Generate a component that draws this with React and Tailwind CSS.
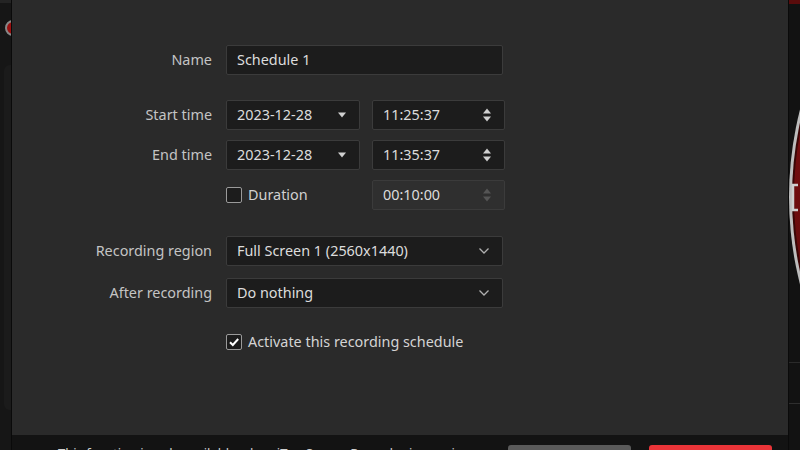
import React, { useState } from "react";

const font = { fontFamily: "'Noto Sans', 'Open Sans', sans-serif" };

const DownTri = ({ className = "" }) => (
  <svg width="10" height="6" viewBox="0 0 10 6" className={className}>
    <path d="M1 0.5 L9 0.5 L5 5.5 Z" fill="currentColor" />
  </svg>
);

const Spinner = ({ disabled }) => (
  <svg width="10" height="16" viewBox="0 0 10 16" className={disabled ? "text-[#555]" : "text-[#d0d0d0]"}>
    <path d="M1 6.5 L9 6.5 L5 1.5 Z" fill="currentColor" />
    <path d="M1 9.5 L9 9.5 L5 14.5 Z" fill="currentColor" />
  </svg>
);

const Chevron = () => (
  <svg width="12" height="8" viewBox="0 0 12 8" className="text-[#b0b0b0]">
    <path d="M1.5 1.5 L6 6 L10.5 1.5" fill="none" stroke="currentColor" strokeWidth="1.3" />
  </svg>
);

const Row = ({ label, children, className = "" }) => (
  <div className={"flex items-center " + className}>
    <div className="w-[200px] text-right text-[14.4px] text-[#c4c4c4]">{label}</div>
    <div className="ml-[14px] flex items-center">{children}</div>
  </div>
);

const Box = ({ className = "", children }) => (
  <div className={"flex h-[30px] items-center rounded-[2px] border border-[#3b3b3b] bg-[#1c1c1c] pl-[10px] pr-[12px] text-[14.4px] text-[#dcdcdc] " + className}>
    {children}
  </div>
);

const Check = ({ checked, onClick }) => (
  <div
    onClick={onClick}
    className="flex h-[16px] w-[16px] items-center justify-center rounded-[2px] border border-[#9a9a9a] bg-[#1c1c1c]"
  >
    {checked && (
      <svg width="12" height="12" viewBox="0 0 12 12">
        <path d="M2 6.2 L4.8 9 L10.2 3" fill="none" stroke="#ffffff" strokeWidth="2" />
      </svg>
    )}
  </div>
);

export default function App() {
  const [useDuration, setUseDuration] = useState(false);
  const [active, setActive] = useState(true);

  return (
    <div className="relative h-[450px] w-[800px] overflow-hidden bg-[#141414]" style={font}>
      {/* app behind the dialog, left edge */}
      <div className="absolute left-0 top-0 h-[450px] w-[12px] bg-[#161616]">
        <div className="h-[3px] bg-[#242424]" />
        <div className="absolute left-[5px] top-[20px] h-[16px] w-[16px] rounded-full border-2 border-[#888] bg-[#9a1010]" />
        <div className="absolute left-[4px] top-[65px] h-[345px] w-[20px] rounded-[6px] bg-[#1b1b1b]" />
      </div>

      {/* app behind the dialog, right edge */}
      <div className="absolute right-0 top-0 h-[450px] w-[12px] bg-[#121212]">
        <svg width="12" height="450" viewBox="0 0 12 450" className="absolute left-0 top-0">
          <defs>
            <linearGradient id="rg" x1="0" y1="0" x2="0" y2="1">
              <stop offset="0" stopColor="#8e1114" />
              <stop offset="1" stopColor="#4e0808" />
            </linearGradient>
          </defs>
          <rect x="0" y="0" width="12" height="4" fill="#5a0c0c" />
          <circle cx="354" cy="197" r="353" fill="#bdbdbd" />
          <circle cx="354" cy="197" r="350" fill="#3a0606" />
          <circle cx="354" cy="197" r="348" fill="url(#rg)" />
          <path d="M10 185 L5 185 L5 210 L10 210" fill="none" stroke="#cfcfcf" strokeWidth="2.5" />
          <rect x="0" y="362" width="12" height="1" fill="#2a2a2a" />
          <rect x="0" y="403" width="12" height="1" fill="#2e2e2e" />
        </svg>
      </div>

      {/* dialog */}
      <div className="absolute left-[11px] top-0 flex h-[450px] w-[778px] flex-col border-x border-[#0a0a0a]">
        <div className="h-[435px] shrink-0 bg-[#2a2a2a] pt-[45px]">
          <Row label="Name">
            <Box className="w-[277px]">Schedule 1</Box>
          </Row>

          <Row label="Start time" className="mt-[25px]">
            <Box className="w-[134px] justify-between">
              <span>2023-12-28</span>
              <DownTri className="text-[#d0d0d0]" />
            </Box>
            <Box className="ml-[12px] w-[133px] justify-between pr-[10px]">
              <span>11:25:37</span>
              <Spinner />
            </Box>
          </Row>

          <Row label="End time" className="mt-[10px]">
            <Box className="w-[134px] justify-between">
              <span>2023-12-28</span>
              <DownTri className="text-[#d0d0d0]" />
            </Box>
            <Box className="ml-[12px] w-[133px] justify-between pr-[10px]">
              <span>11:35:37</span>
              <Spinner />
            </Box>
          </Row>

          <Row label="" className="mt-[10px]">
            <div className="flex w-[134px] items-center">
              <Check checked={useDuration} onClick={() => setUseDuration(!useDuration)} />
              <span className="ml-[6px] text-[14.4px] text-[#d0d0d0]">Duration</span>
            </div>
            <Box className="ml-[12px] w-[133px] justify-between border-[#3a3a3a] bg-[#2f2f2f] pr-[10px] text-[#6c6c6c]">
              <span>00:10:00</span>
              <Spinner disabled />
            </Box>
          </Row>

          <Row label="Recording region" className="mt-[26px]">
            <Box className="w-[277px] justify-between">
              <span>Full Screen 1 (2560x1440)</span>
              <Chevron />
            </Box>
          </Row>

          <Row label="After recording" className="mt-[12px]">
            <Box className="w-[277px] justify-between">
              <span>Do nothing</span>
              <Chevron />
            </Box>
          </Row>

          <Row label="" className="mt-[23px]">
            <Check checked={active} onClick={() => setActive(!active)} />
            <span className="ml-[6px] text-[14.4px] text-[#d4d4d4]">Activate this recording schedule</span>
          </Row>
        </div>

        {/* footer */}
        <div className="flex flex-1 items-start bg-[#131313] pt-[10px]">
          <div className="ml-[46px] whitespace-nowrap text-[13px] leading-[16px] text-[#cfcfcf]">
            This function is only available when iTop Screen Recorder is running
          </div>
          <div className="ml-auto flex shrink-0 gap-[18px] pr-[16px]">
            <button className="h-[30px] w-[123px] rounded-[3px] bg-[#5a5a5a] text-[13px] text-white">Cancel</button>
            <button className="h-[30px] w-[123px] rounded-[3px] bg-[#ea3438] text-[13px] text-white">OK</button>
          </div>
        </div>
      </div>
    </div>
  );
}
